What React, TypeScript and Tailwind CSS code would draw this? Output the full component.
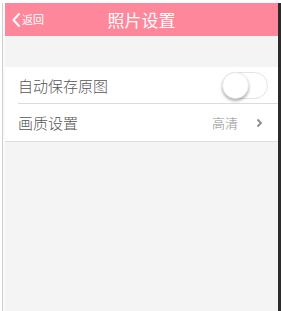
import React from "react";

export default function App() {
  const font = { fontFamily: '"Noto Sans CJK SC", "Noto Sans", sans-serif' };
  return (
    <div className="w-[281px] h-[311px] bg-white flex pt-[3px] overflow-hidden" style={font}>
      <div className="w-[2px] bg-white" />
      <div className="w-px bg-[#cfcfcf]" />
      <div className="w-[2px] bg-[#fafafa]" />
      <div className="flex-1 flex flex-col bg-[#f4f4f4]">
        <div className="h-[33px] bg-[#ff879b] relative flex items-center justify-center">
          <div className="absolute left-[6px] top-0 h-full flex items-center">
            <svg width="10" height="16" viewBox="0 0 10 16" className="mr-[1px]">
              <path d="M8 2 L2.5 8 L8 14" stroke="white" strokeWidth="2" fill="none" strokeLinecap="round" strokeLinejoin="round" />
            </svg>
            <span className="text-[11px] text-white leading-none">返回</span>
          </div>
          <span className="text-[17px] text-white leading-none">照片设置</span>
        </div>
        <div className="h-[31px]" />
        <div className="bg-white border-b border-[#dedede]">
          <div className="h-[36px] flex items-center pl-[13px] pr-[10px]">
            <span className="text-[15px] text-[#555] leading-none flex-1 font-light">自动保存原图</span>
            <div className="w-[46px] h-[27px] rounded-full border border-[#e3e3e3] bg-white relative">
              <div className="absolute left-[-1px] top-[-1px] w-[27px] h-[27px] rounded-full bg-white shadow-[0_2px_3px_rgba(0,0,0,0.3)] border border-[#e8e8e8]" />
            </div>
          </div>
          <div className="ml-[13px] h-px bg-[#dcdcdc]" />
          <div className="h-[37px] flex items-center pl-[13px] pr-[15px]">
            <span className="text-[15px] text-[#555] leading-none flex-1 font-light">画质设置</span>
            <span className="text-[13px] text-[#8a8a8a] leading-none mr-[18px] font-light">高清</span>
            <svg width="7" height="10" viewBox="0 0 7 10">
              <path d="M1.5 1.5 L5 5 L1.5 8.5" stroke="#8a8a8a" strokeWidth="1.8" fill="none" />
            </svg>
          </div>
        </div>
        <div className="flex-1" />
      </div>
      <div className="w-[3px] bg-[#2b2b2b]" />
    </div>
  );
}
